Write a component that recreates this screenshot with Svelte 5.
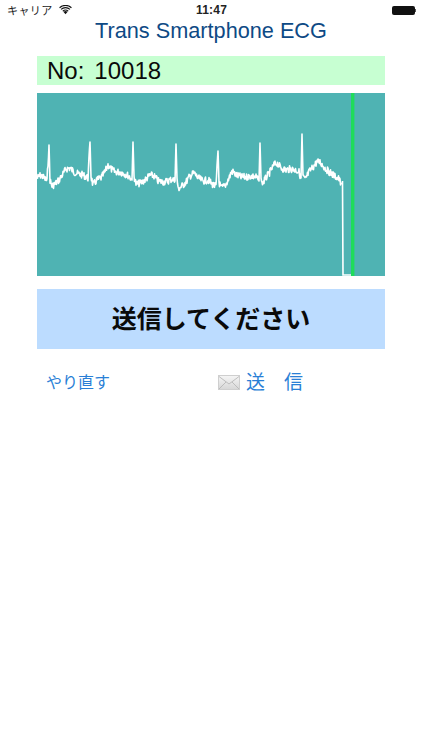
<script lang="ts">
    // rough trace of the recorded wave: [x, y] in page pixels minus the chart origin
    const base: number[][] = [
        [37, 178], [41, 175], [45, 179], [47, 181], [49, 145], [50, 180], [52, 186], [55, 184],
        [59, 180], [63, 174], [66, 169], [70, 168], [74, 172], [78, 174], [83, 175], [88, 178],
        [90, 142], [91, 176], [93, 185], [97, 180], [101, 178], [105, 172], [108, 165], [111, 169],
        [115, 172], [120, 172], [125, 174], [129, 176], [132, 180], [133, 142], [134, 176], [136, 184],
        [141, 183], [146, 179], [150, 175], [154, 176], [158, 181], [163, 182], [168, 181], [172, 179],
        [175, 181], [176, 144], [177, 178], [178, 189], [182, 186], [186, 182], [190, 176], [194, 173],
        [198, 178], [203, 181], [208, 180], [212, 184], [216, 187], [218, 151], [219, 182], [221, 188],
        [225, 186], [229, 178], [232, 171], [236, 175], [241, 177], [246, 177], [251, 176], [256, 177],
        [259, 181], [260, 143], [261, 178], [262, 184], [266, 178], [270, 172], [274, 165], [277, 163],
        [281, 168], [286, 170], [291, 169], [296, 170], [299, 172], [301, 178], [302, 134], [303, 176],
        [305, 180], [309, 172], [313, 167], [317, 162], [320, 162], [324, 167], [328, 171], [332, 174],
        [336, 177], [339, 179], [341, 184], [342, 181]
    ];

    function buildWave() {
        let seed = 7;
        const pts: string[] = [];
        for (let i = 0; i < base.length - 1; i++) {
            const [x0, y0] = base[i];
            const [x1, y1] = base[i + 1];
            // half pixel steps so the noise reads as the fuzzy band of the recording
            const steps = Math.max(1, Math.round((x1 - x0) * 2));
            for (let s = 0; s < steps; s++) {
                seed = (seed * 9301 + 49297) % 233280;
                const t = s / steps;
                const noise = x1 - x0 > 1.5 ? (seed / 233280 - 0.5) * 7 : 0;
                pts.push(`${(x0 + (x1 - x0) * t - 37).toFixed(1)},${(y0 + (y1 - y0) * t + noise - 93).toFixed(1)}`);
            }
        }
        return pts.join(" ");
    }

    const wave = buildWave();
</script>

<main>
    <div class="status">
        <div class="carrier">
            <span>キャリア</span>
            <svg class="wifi" width="13" height="10" viewBox="0 0 14 10">
                <path d="M7 9.6 4.9 7.2a3 3 0 0 1 4.2 0Z" fill="#111" />
                <path d="M3.7 5.9a4.9 4.9 0 0 1 6.6 0l-.8.9a3.7 3.7 0 0 0-5 0Z" fill="#111" />
                <path d="M1.8 3.9a7.6 7.6 0 0 1 10.4 0l-.8.9a6.4 6.4 0 0 0-8.8 0Z" fill="#111" />
                <path d="M.2 2.1a10 10 0 0 1 13.6 0l-.8.9a8.8 8.8 0 0 0-12 0Z" fill="#111" />
            </svg>
        </div>
        <div class="time">11:47</div>
        <div class="battery"><i></i><b></b></div>
    </div>

    <h1>Trans Smartphone ECG</h1>

    <div class="content">
        <div class="number"><span>No:</span><span>10018</span></div>

        <div class="chart">
            <svg width="348" height="183" viewBox="0 0 348 183">
                <polyline points={wave} fill="none" stroke="#fff" stroke-width="1.6" stroke-linejoin="round" />
                <path d="M305.5 88 306 182 H315" fill="none" stroke="#fff" stroke-width="1.6" />
                <rect x="314" y="0" width="3.4" height="183" fill="#1fdc5a" />
            </svg>
        </div>

        <div class="message">送信してください</div>

        <div class="actions">
            <button class="redo">やり直す</button>
            <button class="send">
                <svg width="22" height="15" viewBox="0 0 22 15">
                    <defs>
                        <linearGradient id="env" x1="0" y1="0" x2="0" y2="1">
                            <stop offset="0" stop-color="#f6f6f6" />
                            <stop offset="1" stop-color="#d6d6d6" />
                        </linearGradient>
                    </defs>
                    <rect x="0.5" y="0.5" width="21" height="14" fill="url(#env)" stroke="#cfcfcf" />
                    <path d="M1 1.5 11 9 21 1.5M1 14 8 7M21 14 14 7" fill="none" stroke="#b8b8b8" stroke-width="0.9" />
                </svg>
                <span>送　信</span>
            </button>
        </div>
    </div>
</main>

<style>
    :global(body) {
        margin: 0;
        background: #fff;
    }

    main {
        font-family: "Liberation Sans", "Noto Sans CJK JP", sans-serif;
        width: 422px;
    }

    .status {
        display: grid;
        grid-template-columns: 1fr auto 1fr;
        align-items: center;
        height: 20px;
        padding: 0 6px 0 7px;
        box-sizing: border-box;
        color: #222;
    }

    .carrier {
        display: flex;
        align-items: center;
        gap: 6px;
        font-size: 11px;
        letter-spacing: 0.4px;
    }

    .time {
        font-size: 12px;
        font-weight: bold;
        letter-spacing: 0.2px;
    }

    .battery {
        display: flex;
        align-items: center;
        justify-content: flex-end;
    }

    .battery i {
        display: block;
        width: 23px;
        height: 9px;
        background: #111;
        border-radius: 2px;
    }

    .battery b {
        display: block;
        width: 1.5px;
        height: 3px;
        background: #555;
    }

    h1 {
        margin: 0;
        height: 22px;
        line-height: 22px;
        text-align: center;
        font-size: 21.7px;
        font-weight: normal;
        color: #0e4a85;
    }

    .content {
        display: flex;
        flex-direction: column;
        margin: 14px 37px 0;
    }

    .number {
        display: flex;
        gap: 10px;
        align-items: center;
        height: 29px;
        padding-left: 10px;
        background: #c7ffd2;
        font-size: 24px;
        color: #0a0a0a;
    }

    .chart {
        height: 183px;
        margin-top: 8px;
        background: #4fb3b3;
    }

    .chart svg {
        display: block;
    }

    .message {
        display: flex;
        align-items: center;
        justify-content: center;
        height: 60px;
        padding-bottom: 5px;
        box-sizing: border-box;
        margin-top: 13px;
        background: #bcdcff;
        font-size: 25px;
        font-weight: bold;
        color: #0a0a0a;
    }

    .actions {
        display: flex;
        align-items: center;
        height: 30px;
        margin-top: 18px;
    }

    button {
        display: flex;
        align-items: center;
        border: 0;
        background: none;
        padding: 0;
        font-family: inherit;
        color: #2a7fd6;
    }

    .redo {
        width: 181px;
        padding: 0 0 3px 9px;
        box-sizing: border-box;
        font-size: 16px;
    }

    .send {
        gap: 6px;
        font-size: 19px;
    }

    .send span {
        margin-bottom: 3px;
    }
</style>
